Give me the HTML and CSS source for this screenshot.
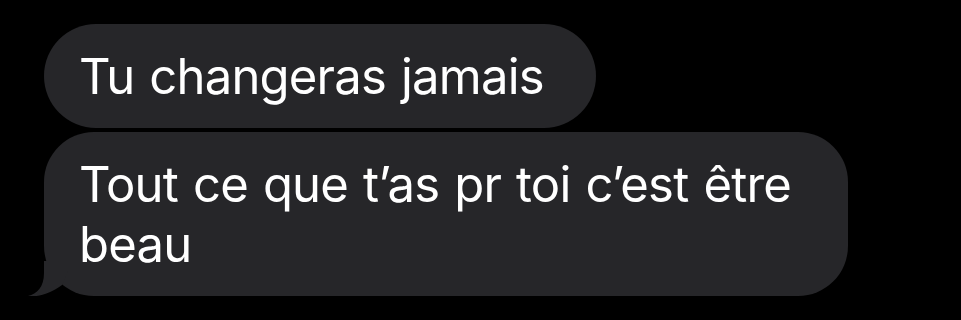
FILE: index.html
```html
<!DOCTYPE html>
<html lang="fr">
<head>
    <meta charset="UTF-8">
    <meta name="viewport" content="width=device-width, initial-scale=1.0">
    <title>Messages</title>
    <link rel="stylesheet" href="styles.css">
</head>
<body>
    <main class="thread">
        <div class="bubble">Tu changeras jamais</div>
        <div class="bubble bubble-last">
            Tout ce que t’as pr toi c’est être beau
            <svg class="tail" width="42" height="36" viewBox="0 0 42 36">
                <path d="M16,0 L16,12 C16,26 9,33 0,35 C8,36.5 22,33 34,24 L40,10 L30,0 Z" fill="#262629"/>
            </svg>
        </div>
    </main>
</body>
</html>
```

FILE: styles.css
```css
* {
    margin: 0;
    padding: 0;
    box-sizing: border-box;
}

body {
    font-family: "Inter", "Roboto", sans-serif;
    background: #000000;
    color: #ffffff;
    overflow: hidden;
}

.thread {
    padding: 24px 0 0 44px;
    display: flex;
    flex-direction: column;
    align-items: flex-start;
    gap: 4px;
}

.bubble {
    position: relative;
    max-width: 804px;
    background: #262629;
    border-radius: 52px;
    padding: 23px 52px 21px 35px;
    font-size: 49px;
    line-height: 60px;
    letter-spacing: -0.8px;
    word-spacing: 2px;
}

.bubble-last {
    border-radius: 50px;
    padding-right: 30px;
}

.tail {
    position: absolute;
    left: -16px;
    bottom: -1px;
}
```
